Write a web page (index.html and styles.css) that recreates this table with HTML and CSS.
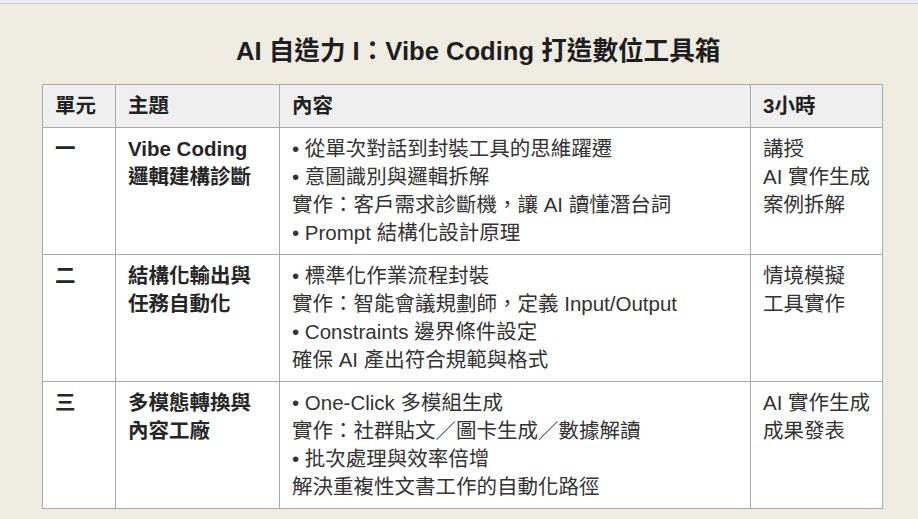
FILE: index.html
```html
<!DOCTYPE html>
<html lang="zh-Hant">
<head>
<meta charset="utf-8">
<title>AI 自造力 I</title>
<link rel="stylesheet" href="styles.css">
</head>
<body>
<div class="topbar"></div>
<main class="page">
  <h1 class="title">AI 自造力 I：Vibe Coding 打造數位工具箱</h1>
  <table class="course">
    <colgroup>
      <col class="c-unit">
      <col class="c-topic">
      <col class="c-content">
      <col class="c-hours">
    </colgroup>
    <thead>
      <tr>
        <th>單元</th>
        <th>主題</th>
        <th>內容</th>
        <th>3小時</th>
      </tr>
    </thead>
    <tbody>
      <tr>
        <td class="strong">一</td>
        <td class="strong">Vibe Coding<br>邏輯建構診斷</td>
        <td>• 從單次對話到封裝工具的思維躍遷<br>• 意圖識別與邏輯拆解<br>實作：客戶需求診斷機，讓 AI 讀懂潛台詞<br>• Prompt 結構化設計原理</td>
        <td>講授<br>AI 實作生成<br>案例拆解</td>
      </tr>
      <tr>
        <td class="strong">二</td>
        <td class="strong">結構化輸出與<br>任務自動化</td>
        <td>• 標準化作業流程封裝<br>實作：智能會議規劃師，定義 Input/Output<br>• Constraints 邊界條件設定<br>確保 AI 產出符合規範與格式</td>
        <td>情境模擬<br>工具實作</td>
      </tr>
      <tr>
        <td class="strong">三</td>
        <td class="strong">多模態轉換與<br>內容工廠</td>
        <td>• One-Click 多模組生成<br>實作：社群貼文／圖卡生成／數據解讀<br>• 批次處理與效率倍增<br>解決重複性文書工作的自動化路徑</td>
        <td>AI 實作生成<br>成果發表</td>
      </tr>
    </tbody>
  </table>
</main>
</body>
</html>
```

FILE: styles.css
```css
html, body {
  margin: 0;
  padding: 0;
}

body {
  background: #eeebe1;
  font-family: "Liberation Sans", "Noto Sans CJK TC", sans-serif;
  color: #2b2b2b;
  width: 918px;
  height: 519px;
  overflow: hidden;
}

.topbar {
  height: 3px;
  background: #ebebf0;
  border-bottom: 1px solid #d2d2da;
}

.page {
  padding: 32px 0 0 42px;
}

.title {
  margin: 0 0 17px 0;
  padding-left: 194px;
  font-size: 25.6px;
  line-height: 31px;
  font-weight: bold;
  color: #1e1e1e;
}

.course {
  border-collapse: collapse;
  width: 840px;
  table-layout: fixed;
  font-size: 20.5px;
  line-height: 28px;
}

.c-unit { width: 73px; }
.c-topic { width: 164px; }
.c-content { width: 471px; }
.c-hours { width: 132px; }

.course th,
.course td {
  border: 1px solid #a9a9a9;
  padding: 7px 12px 7px 12px;
  text-align: left;
  vertical-align: top;
  white-space: nowrap;
}

.course thead th {
  background: #efefef;
  font-weight: bold;
  color: #222;
}

.course tbody td {
  background: #ffffff;
  color: #333;
}

.course tbody td.strong {
  font-weight: bold;
  color: #262626;
}
```
